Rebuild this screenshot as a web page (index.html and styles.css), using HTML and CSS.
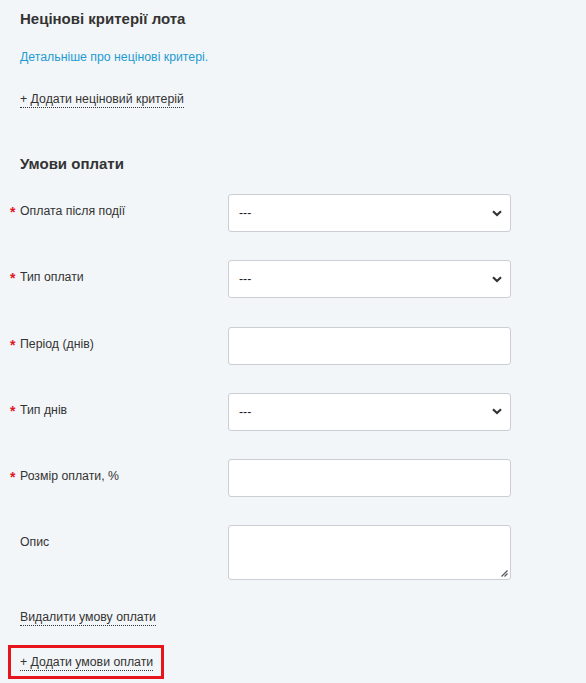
FILE: index.html
```html
<!DOCTYPE html>
<html lang="uk">
<head>
<meta charset="utf-8">
<link rel="stylesheet" href="styles.css">
</head>
<body>
<div class="page">
  <section class="block">
    <h2 class="title">Нецінові критерії лота</h2>
    <p class="more"><a class="info-link" href="#">Детальніше про нецінові критері.</a></p>
    <p class="add-line"><span class="dotted">+ Додати неціновий критерій</span></p>
  </section>

  <section class="block pay">
    <h2 class="title title-pay">Умови оплати</h2>
    <div class="rows">
      <div class="row">
        <span class="req">*</span>
        <span class="label">Оплата після події</span>
        <div class="field select"><span class="val">---</span><svg class="chev" viewBox="0 0 10 7" width="10" height="7"><path d="M1 1.2 L5 5 L9 1.2" fill="none" stroke="#333" stroke-width="2.2"/></svg></div>
      </div>
      <div class="row">
        <span class="req">*</span>
        <span class="label">Тип оплати</span>
        <div class="field select"><span class="val">---</span><svg class="chev" viewBox="0 0 10 7" width="10" height="7"><path d="M1 1.2 L5 5 L9 1.2" fill="none" stroke="#333" stroke-width="2.2"/></svg></div>
      </div>
      <div class="row">
        <span class="req">*</span>
        <span class="label">Період (днів)</span>
        <div class="field"></div>
      </div>
      <div class="row">
        <span class="req">*</span>
        <span class="label">Тип днів</span>
        <div class="field select"><span class="val">---</span><svg class="chev" viewBox="0 0 10 7" width="10" height="7"><path d="M1 1.2 L5 5 L9 1.2" fill="none" stroke="#333" stroke-width="2.2"/></svg></div>
      </div>
      <div class="row">
        <span class="req">*</span>
        <span class="label">Розмір оплати, %</span>
        <div class="field"></div>
      </div>
      <div class="row">
        <span class="req"></span>
        <span class="label">Опис</span>
        <div class="field area"><svg class="grip" viewBox="0 0 7 7" width="7" height="7"><path d="M6.5 0.5 L0.5 6.5 M6.5 3.5 L3.5 6.5" stroke="#555" stroke-width="1.2"/></svg></div>
      </div>
    </div>
    <p class="remove-line"><span class="dotted">Видалити умову оплати</span></p>
    <div class="highlight"><span class="dotted">+ Додати умови оплати</span></div>
  </section>
</div>
</body>
</html>
```

FILE: styles.css
```css
html, body {
  margin: 0;
  padding: 0;
  background: #f3f6f9;
}
body {
  font-family: "Liberation Sans", Arial, sans-serif;
  color: #333;
  font-size: 12.3px;
}
.page {
  width: 586px;
  height: 683px;
  overflow: hidden;
}
.block {
  padding-left: 20px;
}
.title {
  margin: 9px 0 0;
  font-size: 15px;
  line-height: 20px;
  font-weight: bold;
  color: #333;
}
.title-pay {
  margin-top: 0;
}
.more {
  margin: 20px 0 0;
  line-height: 16px;
}
.info-link {
  color: #1f9bd1;
  text-decoration: none;
  font-size: 12.3px;
}
.add-line {
  margin: 26px 0 0;
  line-height: 16px;
}
.dotted {
  display: inline-block;
  line-height: 15px;
  border-bottom: 1px dotted #333;
  color: #333;
}
.pay {
  margin-top: 46px;
}
.rows {
  margin-top: 20px;
  margin-left: -10px;
}
.row {
  display: grid;
  grid-template-columns: 10px 208px 283px;
  align-items: start;
  margin-bottom: 28.3px;
}
.req {
  color: #e3151e;
  font-weight: bold;
  font-size: 14px;
  line-height: 16px;
  padding-top: 10px;
}
.label {
  line-height: 16px;
  padding-top: 9px;
  color: #333;
}
.field {
  box-sizing: border-box;
  height: 38px;
  background: #fff;
  border: 1px solid #ccced6;
  border-radius: 3px;
  display: flex;
  align-items: center;
  padding: 0 8px 0 10px;
}
.select .val {
  flex: 1;
  color: #222;
  font-size: 12.3px;
}
.chev {
  display: block;
}
.area {
  height: 55px;
  align-items: flex-end;
  justify-content: flex-end;
  padding: 0 2px 2px 0;
}
.grip {
  display: block;
}
.remove-line {
  margin: 0;
  line-height: 16px;
}
.highlight {
  margin: 19px 0 0 -12px;
  width: 156px;
  height: 34px;
  box-sizing: border-box;
  border: 3px solid #e8141c;
  padding: 7px 0 0 9px;
}
```
